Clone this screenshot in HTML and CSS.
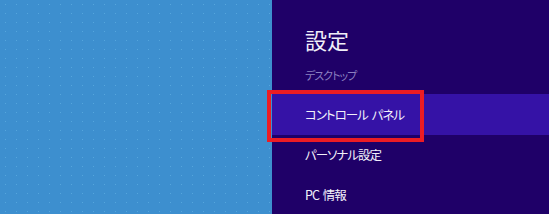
FILE: index.html
```html
<!DOCTYPE html>
<html>
<head>
  <title>設定</title>
  <link rel="stylesheet" href="styles.css">
</head>
<body>
  <div class="screen">
    <div class="start-bg"></div>

    <div class="charm">
      <h1 class="charm-title">設定</h1>
      <div class="charm-item dim">デスクトップ</div>
      <div class="charm-item active">コントロール パネル</div>
      <div class="charm-item">パーソナル設定</div>
      <div class="charm-item">PC 情報</div>
    </div>

    <div class="callout"></div>
  </div>
</body>
</html>
```

FILE: styles.css
```css
* {
  margin: 0;
  padding: 0;
  box-sizing: border-box;
}

body {
  width: 549px;
  height: 214px;
  overflow: hidden;
  font-family: "Noto Sans CJK JP", "Noto Sans", sans-serif;
  font-feature-settings: "palt";
}

.screen {
  position: relative;
  display: flex;
  width: 549px;
  height: 214px;
}

.start-bg {
  width: 272px;
  background-color: #3d8fcf;
  background-image: radial-gradient(circle, #55a6dd 0.6px, transparent 0.9px);
  background-size: 11px 9px;
}

.charm {
  flex: 1;
  background: #1f0068;
  padding-top: 26px;
  display: flex;
  flex-direction: column;
}

.charm-title {
  font-size: 22px;
  font-weight: normal;
  line-height: 26px;
  color: #f0eef8;
  padding-left: 33px;
  margin-bottom: 3px;
}

.charm-item {
  height: 40px;
  line-height: 40px;
  padding-left: 33px;
  font-size: 12.5px;
  letter-spacing: -1px;
  word-spacing: 2px;
  color: #f2f0fa;
}

.charm-item.dim {
  font-size: 11px;
  color: #8c80c0;
}

.charm-item.active {
  background: #3512a6;
  height: 41px;
  line-height: 41px;
  margin-top: -1px;
}

.callout {
  position: absolute;
  left: 267px;
  top: 90px;
  width: 157px;
  height: 52px;
  border: 4px solid #ec1c24;
}
```
